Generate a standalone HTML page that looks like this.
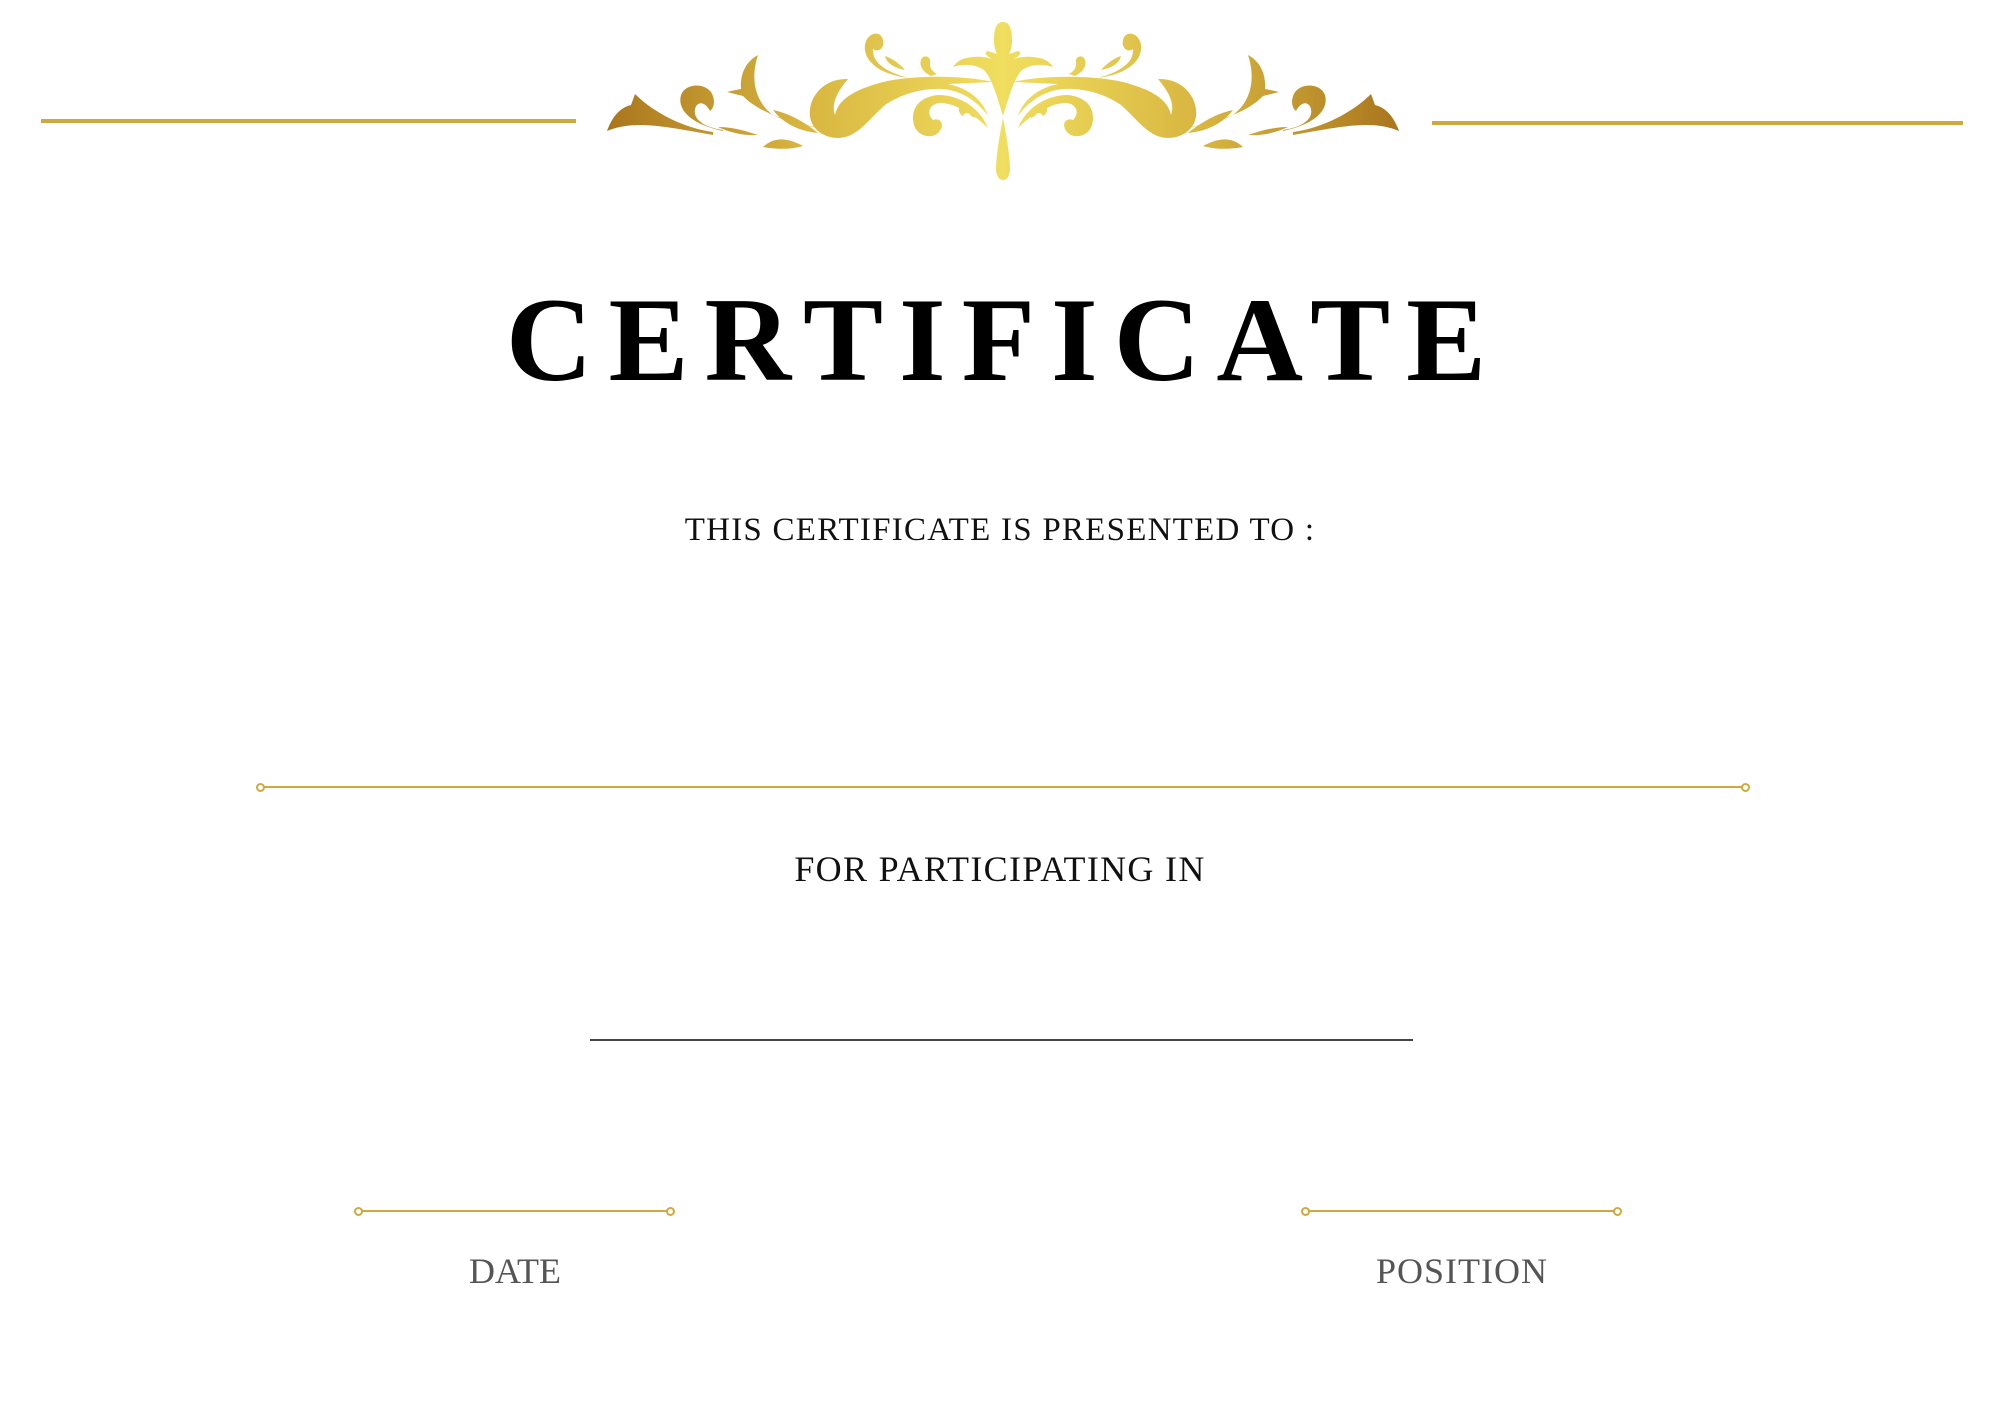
<!DOCTYPE html>
<html><head><meta charset="utf-8"><style>
html,body{margin:0;padding:0;background:#fff;}
body{width:2000px;height:1414px;position:relative;overflow:hidden;font-family:"Liberation Serif",serif;}
.t{position:absolute;left:0;width:2000px;text-align:center;line-height:1;white-space:nowrap;}
.hl{position:absolute;background:#cfa83f;}
.dot{position:absolute;width:5px;height:5px;border:2px solid #cfa83f;border-radius:50%;background:#fff;}
</style></head><body>
<div class="hl" style="left:41px;top:119px;width:535px;height:4px"></div>
<div class="hl" style="left:1432px;top:121px;width:531px;height:4px"></div>

<svg width="2000" height="200" style="position:absolute;left:0;top:0" viewBox="0 0 2000 200">
<defs>
<linearGradient id="g" gradientUnits="userSpaceOnUse" x1="0" y1="0" x2="400" y2="0">
<stop offset="0" stop-color="#f0de5e"/><stop offset="0.5" stop-color="#d8b540"/><stop offset="1" stop-color="#a8741c"/>
</linearGradient>
<g id="half" fill="url(#g)">
<path d="M290 132 C320 128 350 112 368 94 L372 105 C385 108 392 120 396 131 C370 120 340 126 290 135 Z"/>
<path d="M280 131 C312 124 326 110 322 95 C318 84 300 82 292 92 C287 100 289 108 293 111 C298 101 306 101 308 109 C310 119 300 127 280 130 Z"/>
<path d="M160 131 C210 126 245 112 260 96 L276 92 C268 90 262 89 262 89 C263 75 258 62 245 55 C252 76 250 100 230 115 C210 125 180 129 160 131 Z"/>
<path d="M185 133 C200 121 215 113 230 110 C220 123 205 131 185 133 Z"/>
<path d="M200 146 C215 138 228 136 240 147 C222 150 210 149 200 146 Z"/>
<path d="M245 135 C260 130 272 127 285 127 C272 133 258 136 245 135 Z"/>
<path d="M10 82 C40 75 90 75 120 82 C150 90 165 100 168 115 C172 104 166 92 155 79 C178 78 192 95 193 110 C195 126 182 138 165 138 C146 138 135 120 118 105 C100 93 80 88 60 89 C40 91 25 102 15 116 C20 100 35 88 55 84 Z"/>
<path d="M95 78 C125 74 140 60 138 45 C136 32 122 30 120 40 C118 48 125 53 130 49 C131 61 120 71 95 78 Z"/>
<path d="M98 70 C105 62 112 58 118 56 C116 64 108 68 98 70 Z"/>
<path d="M72 76 C80 72 84 66 82 60 C80 54 72 56 73 62 C74 68 70 72 66 74 Z"/>
<path d="M15 128 C24 106 45 95 65 95 C85 97 93 110 89 125 C86 136 71 140 64 132 C58 125 62 117 70 120 C78 112 72 102 60 103 C45 105 28 115 15 128 Z"/>
<path d="M28 118 C30 108 36 102 42 104 C46 108 44 114 40 116 C38 112 34 112 32 116 Z"/>
<path d="M0 22 C7 22 9 30 9 40 C9 46 8 50 6 54 L15 51 C21 53 14 57 11 59 C19 56 31 56 40 59 C45 61 48 64 50 67 C38 63 25 65 18 71 C10 81 5 100 0 116 Z"/>
<path d="M0 118 C4 138 7 158 7 170 C6 179 2 180 0 180 Z"/>
</g>
</defs>
<g transform="translate(1003,0)"><use href="#half"/><use href="#half" transform="scale(-1,1)"/></g>
</svg>

<div class="t" style="top:280px;left:4px;font-size:120px;letter-spacing:16px;font-weight:bold;color:#000;">CERTIFICATE</div>
<div class="t" style="top:514px;font-size:33px;letter-spacing:1.25px;color:#111;">THIS CERTIFICATE IS PRESENTED TO :</div>

<div class="hl" style="left:262px;top:786px;width:1483px;height:2px"></div>
<div class="dot" style="left:256px;top:783px"></div>
<div class="dot" style="left:1741px;top:783px"></div>

<div class="t" style="top:851px;font-size:36px;letter-spacing:1.3px;color:#111;">FOR PARTICIPATING IN</div>

<div style="position:absolute;left:590px;top:1039px;width:823px;height:2px;background:#444"></div>

<div class="hl" style="left:360px;top:1210px;width:308px;height:2px"></div>
<div class="dot" style="left:354px;top:1207px"></div>
<div class="dot" style="left:666px;top:1207px"></div>
<div class="hl" style="left:1307px;top:1210px;width:308px;height:2px"></div>
<div class="dot" style="left:1301px;top:1207px"></div>
<div class="dot" style="left:1613px;top:1207px"></div>

<div class="t" style="top:1253px;left:-485px;font-size:36px;color:#555;">DATE</div>
<div class="t" style="top:1253px;left:462px;font-size:36px;letter-spacing:1px;color:#555;">POSITION</div>
</body></html>
